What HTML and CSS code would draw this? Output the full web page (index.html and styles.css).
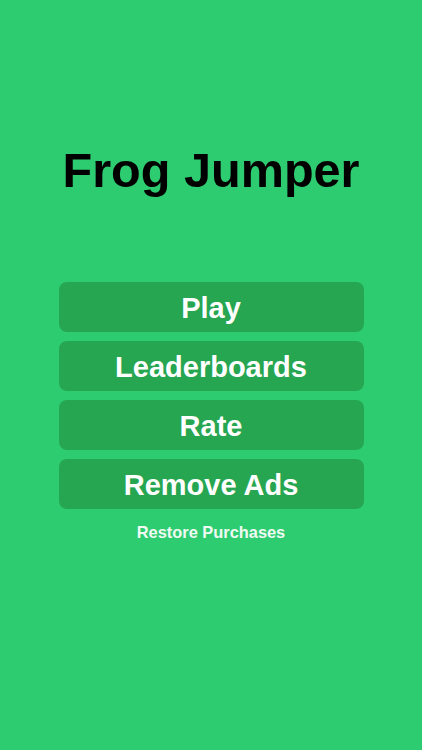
FILE: index.html
```html
<!DOCTYPE html>
<html>
<head>
<meta charset="utf-8">
<link rel="stylesheet" href="styles.css">
</head>
<body>
<div class="screen">
  <h1 class="title">Frog Jumper</h1>
  <div class="menu">
    <div class="btn">Play</div>
    <div class="btn">Leaderboards</div>
    <div class="btn">Rate</div>
    <div class="btn">Remove Ads</div>
  </div>
  <div class="restore">Restore Purchases</div>
</div>
</body>
</html>
```
FILE: styles.css
```css
html, body {
  margin: 0;
  padding: 0;
  background: #2ecc71;
}
.screen {
  width: 422px;
  height: 750px;
  display: flex;
  flex-direction: column;
  align-items: center;
  font-family: "Liberation Sans", Arial, sans-serif;
}
.title {
  margin: 140px 0 0 0;
  font-size: 48.6px;
  line-height: 60px;
  font-weight: 700;
  color: #000;
}
.menu {
  margin-top: 82px;
  width: 305px;
  display: flex;
  flex-direction: column;
  gap: 9px;
}
.btn {
  height: 50px;
  box-sizing: border-box;
  padding-top: 3px;
  border-radius: 8px;
  background: #27a651;
  color: #fff;
  font-size: 29px;
  font-weight: 700;
  display: flex;
  align-items: center;
  justify-content: center;
}
.restore {
  margin-top: 13px;
  color: #eefaf2;
  font-size: 16.4px;
  font-weight: 700;
  line-height: 20px;
}
```
